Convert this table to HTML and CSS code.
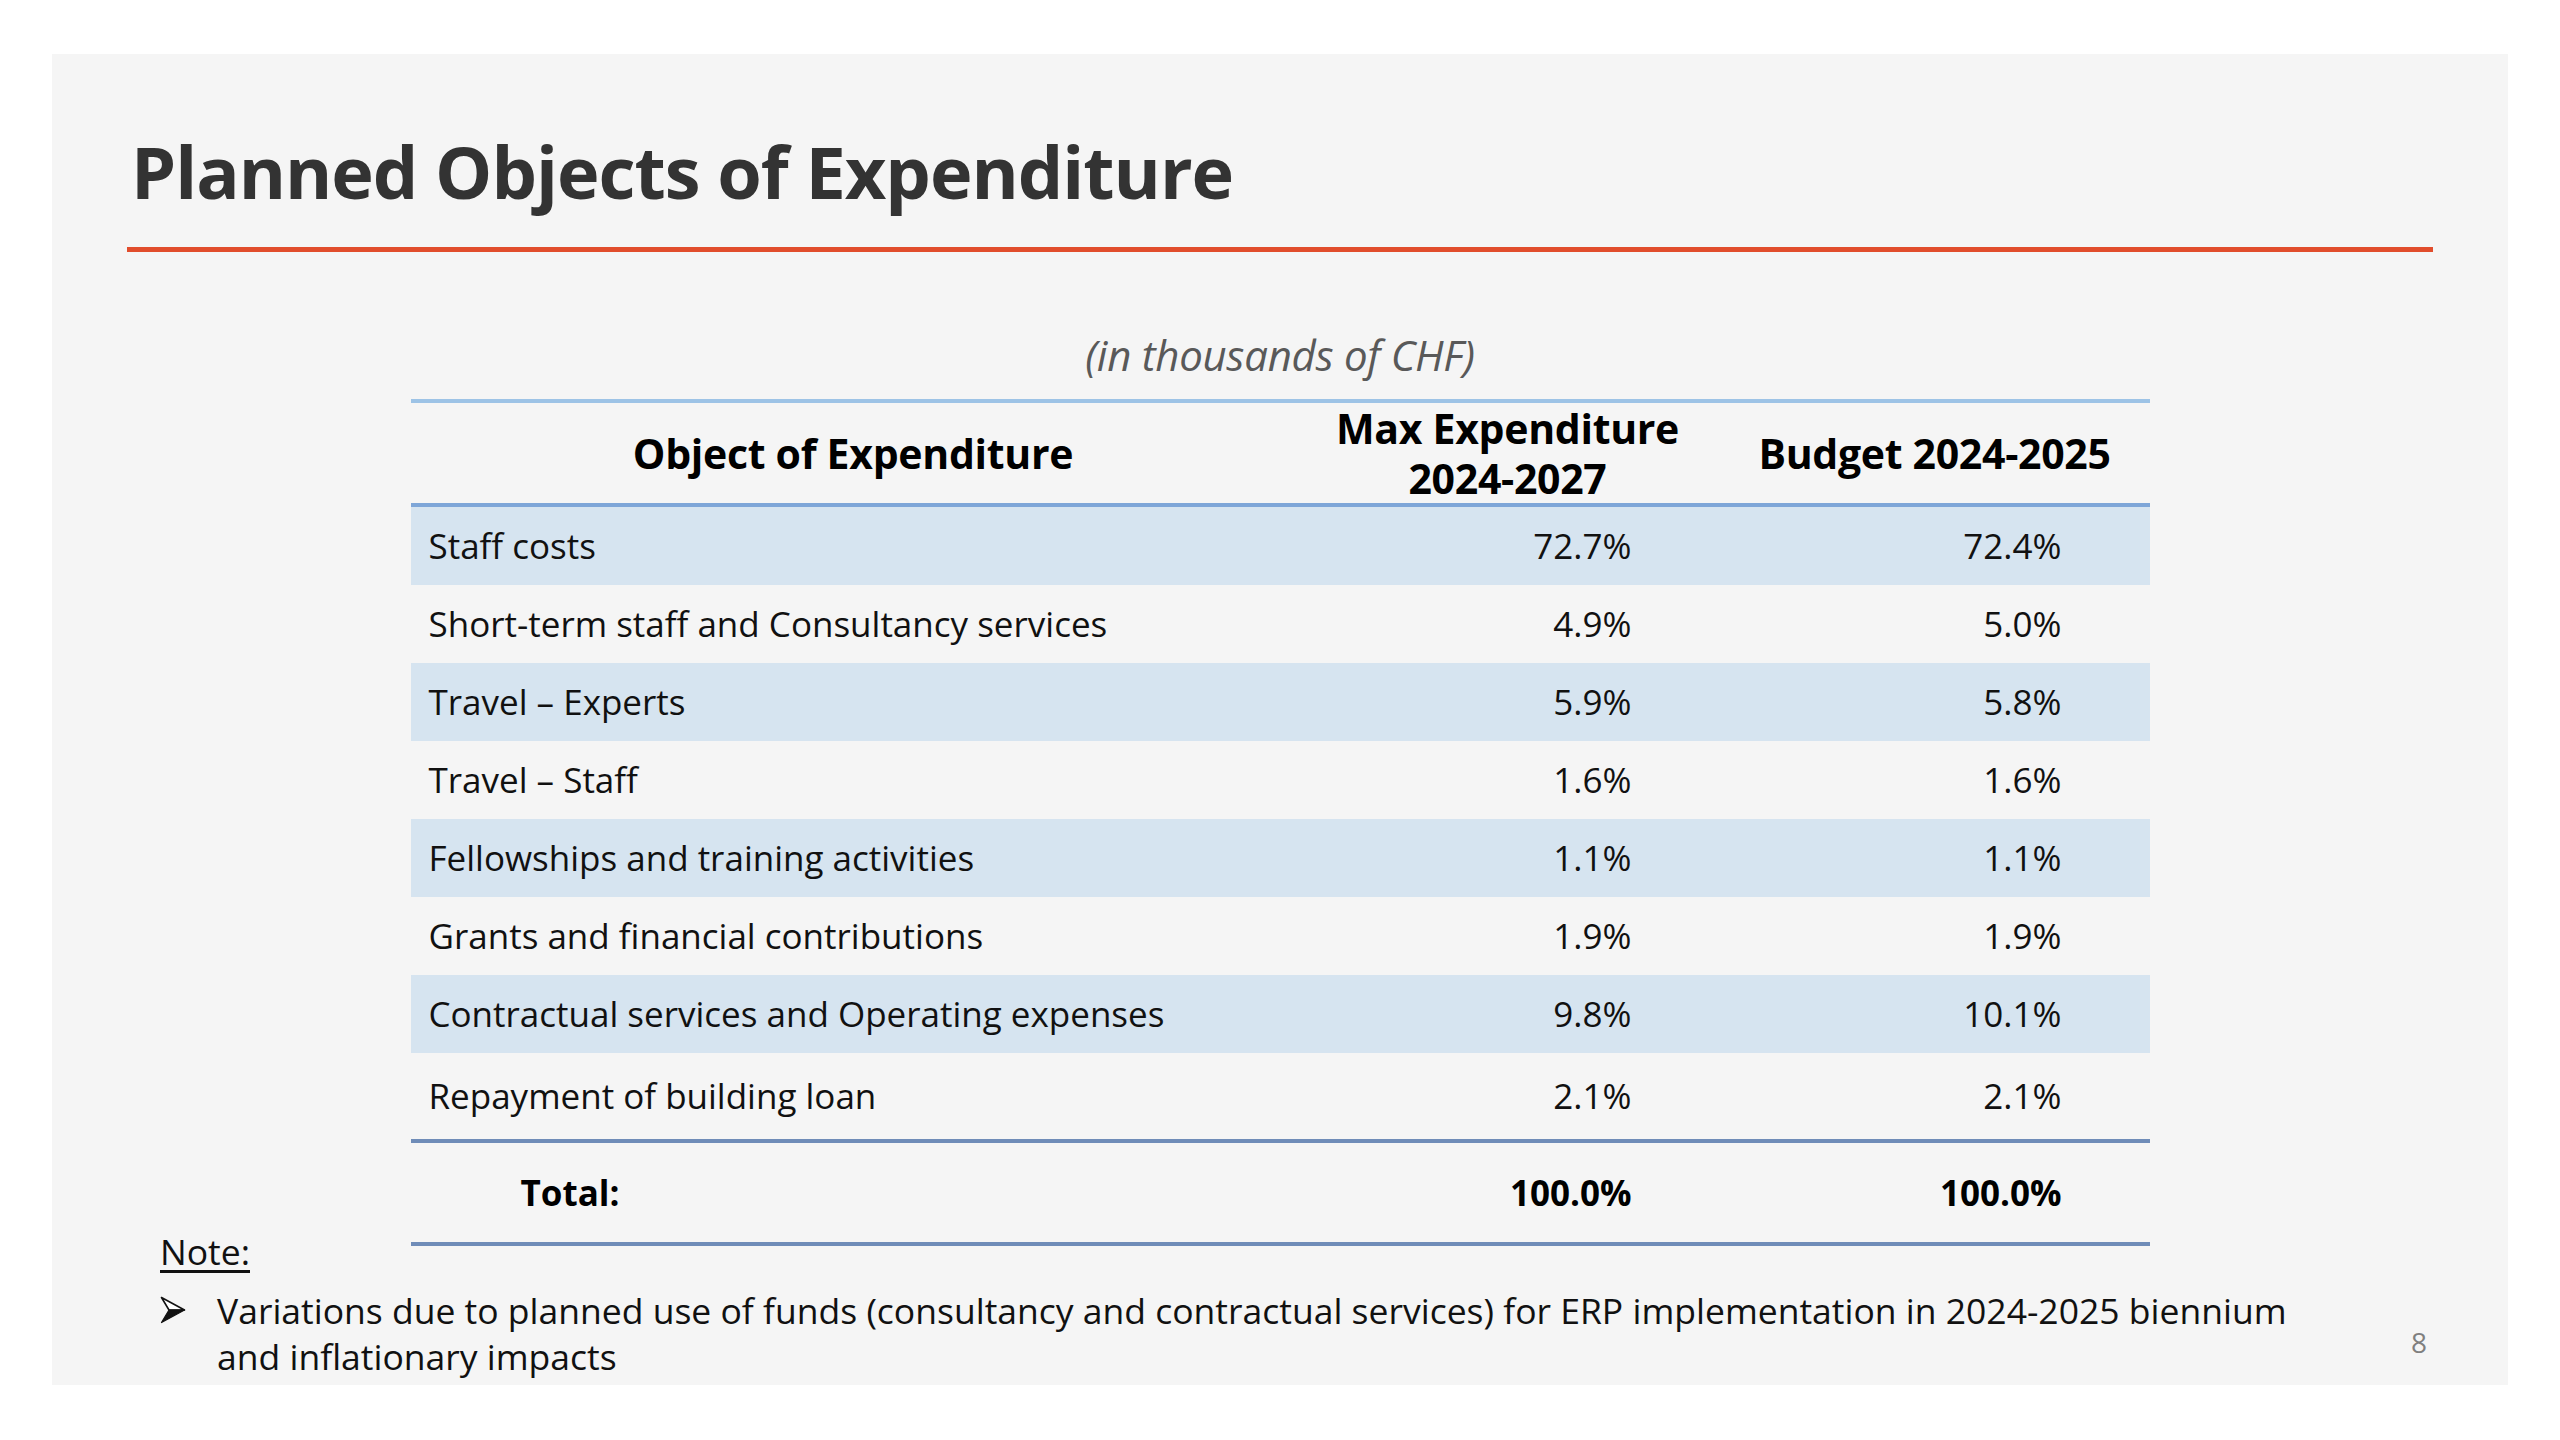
FILE: index.html
```html
<!DOCTYPE html>
<html lang="en">
<head>
<meta charset="utf-8">
<title>Planned Objects of Expenditure</title>
<link rel="stylesheet" href="styles.css">
</head>
<body>
<div class="slide">
  <h1 class="title">Planned Objects of Expenditure</h1>
  <div class="rule"></div>
  <p class="subtitle">(in thousands of CHF)</p>
  <table class="budget">
    <colgroup>
      <col class="c1"><col class="c2"><col class="c3">
    </colgroup>
    <thead>
      <tr>
        <th>Object of Expenditure</th>
        <th><span class="hl">Max Expenditure</span><span class="hl">2024-2027</span></th>
        <th>Budget 2024-2025</th>
      </tr>
    </thead>
    <tbody>
      <tr class="band"><td>Staff costs</td><td class="num">72.7%</td><td class="num">72.4%</td></tr>
      <tr><td>Short-term staff and Consultancy services</td><td class="num">4.9%</td><td class="num">5.0%</td></tr>
      <tr class="band"><td>Travel – Experts</td><td class="num">5.9%</td><td class="num">5.8%</td></tr>
      <tr><td>Travel – Staff</td><td class="num">1.6%</td><td class="num">1.6%</td></tr>
      <tr class="band"><td>Fellowships and training activities</td><td class="num">1.1%</td><td class="num">1.1%</td></tr>
      <tr><td>Grants and financial contributions</td><td class="num">1.9%</td><td class="num">1.9%</td></tr>
      <tr class="band"><td>Contractual services and Operating expenses</td><td class="num">9.8%</td><td class="num">10.1%</td></tr>
      <tr class="last"><td>Repayment of building loan</td><td class="num">2.1%</td><td class="num">2.1%</td></tr>
    </tbody>
    <tfoot>
      <tr><td class="total-label">Total:</td><td class="num">100.0%</td><td class="num">100.0%</td></tr>
    </tfoot>
  </table>
  <div class="note">
    <div class="note-label">Note:</div>
    <div class="bullet">
      <svg class="arrow" viewBox="0 0 26 28" width="26" height="28" aria-hidden="true">
        <polygon points="1.5,1.5 24.5,14 9,14" fill="#fff" stroke="#111" stroke-width="1.6" stroke-linejoin="round"/>
        <polygon points="9,14 24.5,14 1.5,26.5" fill="#111" stroke="#111" stroke-width="1.2" stroke-linejoin="round"/>
      </svg>
      <p class="bullet-text">Variations due to planned use of funds (consultancy and contractual services) for ERP implementation in 2024-2025 biennium and inflationary impacts</p>
    </div>
  </div>
  <div class="page-num">8</div>
</div>
</body>
</html>
```

FILE: styles.css
```css
html, body {
  margin: 0;
  padding: 0;
  background: #ffffff;
}

body {
  font-family: "Open Sans", "Noto Sans", "Liberation Sans", sans-serif;
  color: #111;
}

.slide {
  position: relative;
  margin: 54px 0 0 52px;
  width: 2456px;
  height: 1331px;
  background: #f5f5f5;
  display: flex;
  flex-direction: column;
  overflow: hidden;
}

.title {
  margin: 0;
  padding: 72px 0 0 79px;
  font-size: 72px;
  line-height: 90px;
  font-weight: 700;
  color: #333333;
  letter-spacing: -1px;
}

.rule {
  margin: 31px 0 0 75px;
  width: 2306px;
  height: 5px;
  background: #e14d2c;
}

.subtitle {
  margin: 78px 0 0 0;
  text-align: center;
  font-size: 42px;
  line-height: 50px;
  font-style: italic;
  color: #595959;
  letter-spacing: -0.3px;
}

.budget {
  margin: 19px auto 0 auto;
  width: 1739px;
  border-collapse: separate;
  border-spacing: 0;
  table-layout: fixed;
  font-size: 35px;
}

.c1 { width: 885px; }
.c2 { width: 424px; }
.c3 { width: 430px; }

.budget th {
  padding: 0;
  font-size: 41px;
  font-weight: 700;
  text-align: center;
  color: #000;
  border-top: 4px solid #9dc3e6;
  border-bottom: 4px solid #7ea6d8;
  letter-spacing: -0.3px;
}

.budget th .hl {
  display: block;
  height: 50px;
  line-height: 50px;
}

.budget td {
  padding: 16px 0 16px 18px;
  line-height: 46px;
  color: #111;
}

.budget tbody tr.band td {
  background: #d6e4f0;
}

.budget tbody tr.last td {
  padding-top: 20px;
  padding-bottom: 20px;
}

.budget td.num {
  text-align: right;
  padding-right: 88px;
  padding-left: 0;
}

.budget tfoot td {
  border-top: 4px solid #6f8cb8;
  border-bottom: 4px solid #6f8cb8;
  padding-top: 27px;
  padding-bottom: 26px;
  font-weight: 700;
  color: #000;
}

.budget tfoot td.total-label {
  padding-left: 110px;
}

.note {
  margin: -18px 0 0 108px;
  font-size: 35.5px;
  line-height: 46px;
  color: #111;
}

.note-label {
  text-decoration: underline;
  text-underline-offset: 5px;
}

.bullet {
  margin-top: 13px;
  display: flex;
  align-items: flex-start;
}

.arrow {
  flex: none;
  width: 26px;
  height: 28px;
  margin: 9px 31px 0 0;
}

.bullet-text {
  margin: 0;
  width: 2090px;
}

.page-num {
  position: absolute;
  right: 81px;
  top: 1270px;
  font-size: 28px;
  line-height: 36px;
  color: #7f7f7f;
}
```
